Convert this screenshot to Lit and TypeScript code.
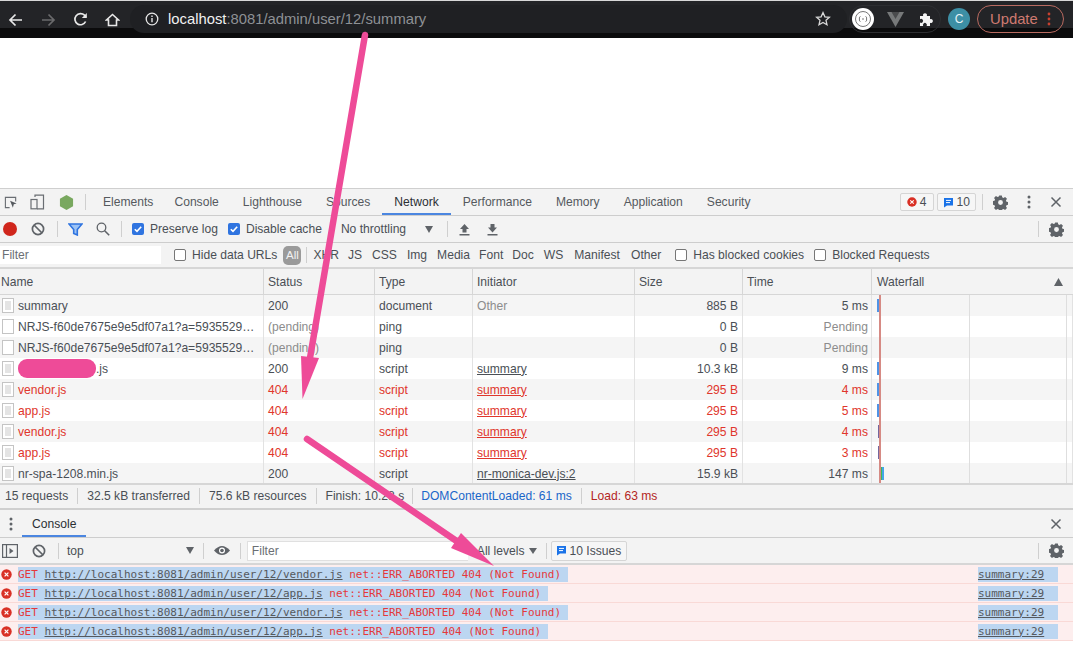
import { LitElement, html, css } from "lit";
import { customElement } from "lit/decorators.js";

const gear = (s = 15) => html`<svg class="ic" width=${s} height=${s} viewBox="0 0 16 16"><path fill="#5f6368" fill-rule="evenodd" d="M6.6 0.5h2.8l.4 2 1.3.6 1.8-1.1 2 2-1.1 1.8.6 1.3 2 .4v2.900l-2 .4-.6 1.3 1.1 1.8-2 2-1.8-1.1-1.3.6-.4 2H6.6l-.4-2-1.3-.6-1.8 1.1-2-2 1.1-1.8-.6-1.3-2-.4V6.6l2-.4.6-1.3L1.1 3.100l2-2 1.8 1.100 1.300-.6zM8 5.400a2.600 2.600 0 1 0 0 5.200 2.600 2.600 0 0 0 0-5.200z"/></svg>`;
const close = html`<svg class="ic" width="12" height="12" viewBox="0 0 12 12"><path d="M1.500 1.500l9 9M10.500 1.500l-9 9" stroke="#5f6368" stroke-width="1.500"/></svg>`;
const block = html`<svg class="ic" width="14" height="14" viewBox="0 0 14 14"><circle cx="7" cy="7" r="5.600" fill="none" stroke="#5f6368" stroke-width="1.700"/><path d="M3 3l8 8" stroke="#5f6368" stroke-width="1.700"/></svg>`;
const kebab = html`<svg class="ic" width="4" height="14" viewBox="0 0 4 14"><circle cx="2" cy="2" r="1.500" fill="#5f6368"/><circle cx="2" cy="7" r="1.500" fill="#5f6368"/><circle cx="2" cy="12" r="1.500" fill="#5f6368"/></svg>`;
const msgIcon = html`<svg class="ic" width="11" height="11" viewBox="0 0 11 11"><path d="M1 1h9v7.500H4L1 10.500z" fill="#1a73e8"/><path d="M3 3.400h5M3 5.600h4" stroke="#fff" stroke-width="1"/></svg>`;
const errIcon = (s = 11) => html`<svg class="ic" width=${s} height=${s} viewBox="0 0 11 11"><circle cx="5.500" cy="5.500" r="5.200" fill="#d93025"/><path d="M3.600 3.600l3.800 3.800M7.400 3.600L3.600 7.400" stroke="#fff" stroke-width="1.200"/></svg>`;
const fileIcon = html`<svg class="ic" width="12" height="15" viewBox="0 0 12 15"><rect x=".5" y=".5" width="11" height="14" fill="#fff" stroke="#c4c4c4"/></svg>`;
const scriptIcon = html`<svg class="ic" width="12" height="15" viewBox="0 0 12 15"><rect x=".5" y=".5" width="11" height="14" fill="#fff" stroke="#c4c4c4"/><path d="M3 3h6v9H3z" fill="#e4e4e4"/></svg>`;

type Row = { n: string; s: string; t: string; i: string; link?: boolean; size: string; time: string; err?: boolean; dim?: boolean; blank?: boolean; redact?: boolean; bar?: string };
const rows: Row[] = [
  { n: "summary", s: "200", t: "document", i: "Other", size: "885 B", time: "5 ms", bar: "blue" },
  { n: "NRJS-f60de7675e9e5df07a1?a=5935529…", s: "(pending)", t: "ping", i: "", size: "0 B", time: "Pending", dim: true, blank: true },
  { n: "NRJS-f60de7675e9e5df07a1?a=5935529…", s: "(pending)", t: "ping", i: "", size: "0 B", time: "Pending", dim: true, blank: true },
  { n: "main-bundle.js", s: "200", t: "script", i: "summary", link: true, size: "10.3 kB", time: "9 ms", redact: true, bar: "blue" },
  { n: "vendor.js", s: "404", t: "script", i: "summary", link: true, size: "295 B", time: "4 ms", err: true, bar: "blue" },
  { n: "app.js", s: "404", t: "script", i: "summary", link: true, size: "295 B", time: "5 ms", err: true, bar: "blue" },
  { n: "vendor.js", s: "404", t: "script", i: "summary", link: true, size: "295 B", time: "4 ms", err: true, bar: "purple" },
  { n: "app.js", s: "404", t: "script", i: "summary", link: true, size: "295 B", time: "3 ms", err: true, bar: "purple" },
  { n: "nr-spa-1208.min.js", s: "200", t: "script", i: "nr-monica-dev.js:2", link: true, size: "15.9 kB", time: "147 ms", bar: "green" },
];
const tabs = ["Elements", "Console", "Lighthouse", "Sources", "Network", "Performance", "Memory", "Application", "Security"];
const types = ["XHR", "JS", "CSS", "Img", "Media", "Font", "Doc", "WS", "Manifest", "Other"];
const gaps = [6, 9, 10, 10, 10, 9, 9, 10, 11, 11];
const logs = ["vendor.js", "app.js", "vendor.js", "app.js"];

@customElement("app-root")
export class AppRoot extends LitElement {
  static styles = css`
    :host { display: block; position: relative; width: 1073px; height: 647px; overflow: hidden; background: #fff;
      font-family: "Liberation Sans", Arial, sans-serif; font-size: 12.1px; color: #4a4f55; }
    .ic { display: block; flex: none; }
    .chrome { height: 38px; box-sizing: border-box; border-top: 1px solid #d8d8d8; background: linear-gradient(#232427 0 27px, #0b0b0c 27px); display: flex; align-items: center; padding-left: 0; }
    .nav { display: flex; align-items: center; width: 130px; padding-left: 0; flex: none; }
    .nav > div { width: 32px; display: flex; justify-content: center; }
    .omni { width: 717px; height: 28px; margin-top: -1px; border-radius: 14px; background: #1f2023; flex: none; display: flex; align-items: center; padding-left: 15px; box-sizing: border-box; font-size: 14.8px; color: #8e9195; position: relative; }
    .omni b { font-weight: 400; color: #f1f1f1; }
    .omni .ic:first-child { margin-right: 9px; }
    .star { position: absolute; right: 16px; top: 6px; }
    .ext { margin-left: 2px; width: 92px; height: 28px; margin-top: -1px; border: 1px solid #2d2e31; border-radius: 14px; box-sizing: border-box; display: flex; align-items: center; gap: 13px; padding-left: 2px; flex: none; }
    .circ { width: 22px; height: 22px; border-radius: 50%; background: #fff; display: flex; align-items: center; justify-content: center; }
    .avatar { width: 22px; height: 22px; border-radius: 50%; background: #3d8fa5; color: #e8f3f6; font-size: 12px; display: flex; align-items: center; justify-content: center; margin: -1px 0 0 7px; flex: none; }
    .update { width: 87px; height: 28px; margin: -1px 0 0 7px; border: 1px solid #b96a60; border-radius: 14px; box-sizing: border-box; color: #cf7a70; font-size: 14.8px; display: flex; align-items: center; justify-content: space-between; padding: 0 12px; flex: none; }
    .blank { height: 150px; background: #fff; }

    .dev { border-top: 1px solid #cfcfcf; background: #f3f3f3; height: 458px; }
    .bar { display: flex; align-items: center; background: #f3f3f3; border-bottom: 1px solid #cdcdcd; box-sizing: border-box; position: relative; }
    .tabs { height: 27px; padding-left: 3px; }
    .tb { display: flex; align-items: center; height: 100%; padding: 0 12px; box-sizing: border-box; color: #55595e; white-space: nowrap; }
    .tb:first-of-type { margin-right: -3px; }
    .tb.on { color: #2b2f33; border-bottom: 2px solid #4b86e0; padding-top: 2px; }
    .sep { width: 1px; height: 16px; background: #cfcfcf; flex: none; }
    .spacer { flex: 1; }
    .badge { height: 18px; border: 1px solid #d5d5d5; border-radius: 2px; display: flex; align-items: center; gap: 3px; padding: 0 5px; box-sizing: border-box; background: #f6f6f6; }
    .tool { height: 27px; }
    .cb { width: 12px; height: 12px; border-radius: 2px; box-sizing: border-box; flex: none; border: 1px solid #767676; background: #fff; }
    .cb.on { background: #2f74e0; border: none; display: flex; align-items: center; justify-content: center; }
    .tri { width: 0; height: 0; border-left: 4px solid transparent; border-right: 4px solid transparent; border-top: 7px solid #5f6368; flex: none; }
    .filter { height: 26px; border-bottom: 2px solid #d6d6d6; }
    .finput { width: 161px; height: 18px; background: #fff; box-sizing: border-box; padding-left: 2px; line-height: 18px; color: #6b6f74; flex: none; }
    .all { width: 18px; height: 19px; background: #9a9a9a; color: #f2f2f2; border-radius: 5px; display: flex; align-items: center; justify-content: center; font-size: 11.5px; }

    .grid { display: grid; grid-template-columns: 264px 111px 98px 162px 108px 129px 1fr; }
    .hd { height: 26px; border-bottom: 1px solid #d6d6d6; box-sizing: border-box; }
    .hd > div { border-right: 1px solid #d6d6d6; display: flex; align-items: center; padding-left: 4px; color: #4a4f55; height: 25px; }
    .hd > div:first-child { padding-left: 1px; }
    .hd > div:last-child { border-right: none; padding-left: 5px; justify-content: space-between; padding-right: 10px; }
    .rowsWrap { position: relative; }
    .row { height: 21px; background: #fff; }
    .row:nth-child(odd) { background: #f5f5f5; }
    .row > div { border-right: 1px solid #e2e2e2; display: flex; align-items: center; padding: 0 3px 0 4px; box-sizing: border-box; white-space: nowrap; overflow: hidden; position: relative; min-width: 0; }
    .row > div:first-child { padding-left: 2px; gap: 4px; }
    .row > .r { justify-content: flex-end; padding-right: 4px; }
    .row > .r.t { padding-right: 3px; }
    .row.err > div { color: #e0362c; }
    .dim { color: #8c8c8c !important; }
    .lnk { text-decoration: underline; }
    .redact { width: 78px; height: 19px; background: #ee4b98; border-radius: 9px; margin-right: -4px; flex: none; }
    .wf { background-image: linear-gradient(#dedede, #dedede), linear-gradient(#dedede, #dedede); background-size: 1px 100%; background-repeat: no-repeat; background-position: 97px 0, 194px 0; }
    .wbar { position: absolute; left: 5px; top: 4px; width: 2px; height: 13px; }
    .wbar.blue { background: #4f93e6; }
    .wbar.purple { background: #75679e; left: 6px; }
    .wbar.green { background: linear-gradient(90deg, #3fb85a 60%, #43a5e8 60%); width: 4px; left: 8px; }
    .redline { position: absolute; left: 879px; top: 0; bottom: 0; width: 2px; background: #d68a84; }

    .status { height: 27px; border-top: 2px solid #d6d6d6; border-bottom: 2px solid #cfcfcf; margin-top: -1px; padding: 0 0 1px 5px; }
    .status .sep { margin: 0 9px; }
    .ctabs { height: 27px; margin-top: 1px; }
    .ctool { height: 27px; border-bottom: 2px solid #d6d6d6; }
    .cinput { width: 221px; height: 20px; background: #fff; border: 1px solid #e0e0e0; border-right: none; box-sizing: border-box; line-height: 18px; padding-left: 4px; color: #6b6f74; flex: none; }
    .logs { font-family: "DejaVu Sans Mono", "Liberation Mono", monospace; font-size: 11px; background: #fff; height: 90px; }
    .log { height: 19px; background: #fdeeee; border-bottom: 1px solid #f9d9d6; box-sizing: border-box; display: flex; align-items: center; color: #e5383b; padding-left: 1px; }
    .log .msg { margin-left: 6px; background: #bcd6f1; line-height: 15px; padding-right: 7px; white-space: pre; flex: none; }
    .log u { color: #55595e; }
    .log .src { margin-left: auto; margin-right: 15px; width: 80px; background: #bcd6f1; line-height: 15px; color: #55595e; text-decoration: underline; box-sizing: border-box; flex: none; }
    .arrows { position: absolute; left: 0; top: 0; pointer-events: none; }
  `;

  render() {
    const check = html`<svg width="10" height="10" viewBox="0 0 10 10"><path d="M1.800 5.200l2.200 2.200 4.200-4.600" fill="none" stroke="#fff" stroke-width="1.600"/></svg>`;
    const cb = (on: boolean, ml: number) => html`<span class="cb ${on ? "on" : ""}" style="margin-left:${ml}px">${on ? check : ""}</span>`;
    const ml = (v: number, t: string) => html`<span style="margin-left:${v}px;white-space:nowrap">${t}</span>`;
    return html`
      <div class="chrome">
        <div class="nav">
          <div><svg width="16" height="14" viewBox="0 0 16 14"><path d="M14 7H2.500M7.500 1.500L2 7l5.500 5.500" fill="none" stroke="#e8e8e8" stroke-width="1.700"/></svg></div>
          <div><svg width="16" height="14" viewBox="0 0 16 14"><path d="M2 7h11.500M8.500 1.500L14 7l-5.500 5.500" fill="none" stroke="#6a6a6c" stroke-width="1.700"/></svg></div>
          <div><svg width="15" height="15" viewBox="0 0 15 15"><path d="M12.600 9.500A5.600 5.600 0 1 1 11.500 3.200L13 5" fill="none" stroke="#e8e8e8" stroke-width="1.700"/><path d="M13.800 1v5h-5z" fill="#e8e8e8"/></svg></div>
          <div><svg width="15" height="14" viewBox="0 0 15 14"><path d="M7.500 1.500L1.500 7h2v5.500h8V7h2z" fill="none" stroke="#e8e8e8" stroke-width="1.600"/></svg></div>
        </div>
        <div class="omni">
          <svg class="ic" width="14" height="14" viewBox="0 0 14 14"><circle cx="7" cy="7" r="5.800" fill="none" stroke="#e6e6e6" stroke-width="1.300"/><path d="M7 6v4.200M7 3.600v1.400" stroke="#e6e6e6" stroke-width="1.400"/></svg>
          <span><b>localhost</b>:8081/admin/user/12/summary</span>
          <svg class="star" width="16" height="16" viewBox="0 0 16 16"><path d="M8 1.600l1.900 4.200 4.500.5-3.400 3 1 4.500L8 11.500l-4 2.300 1-4.500-3.400-3 4.500-.5z" fill="none" stroke="#d8d8d8" stroke-width="1.300"/></svg>
        </div>
        <div class="ext">
          <div class="circ"><svg width="18" height="18" viewBox="0 0 18 18"><circle cx="9" cy="9" r="7.500" fill="none" stroke="#777" stroke-width="1"/><path d="M6.500 6.500Q5 6.500 5.400 9 5 11.500 6.500 11.500M11.500 6.500Q13 6.500 12.600 9 13 11.500 11.500 11.500M8 9h2" fill="none" stroke="#777"/></svg></div>
          <svg width="17" height="15" viewBox="0 0 17 15"><path d="M0 0h17L8.500 15z" fill="#77797a"/><path d="M4.500 0h8L8.500 7z" fill="#4a4b4d"/></svg>
          <svg style="margin-left:2px" width="15" height="15" viewBox="0 0 15 15"><path d="M1 4h3.200a2 2 0 1 1 3.600 0H11v3.200a2 2 0 1 1 0 3.600V14H7.600a2 2 0 1 0-3.400 0H1v-3.400a2 2 0 1 0 0-3.400z" fill="#f4f4f4"/></svg>
        </div>
        <div class="avatar">C</div>
        <div class="update"><span>Update</span><svg width="4" height="14" viewBox="0 0 4 14"><circle cx="2" cy="2" r="1.400" fill="#c8402f"/><circle cx="2" cy="7" r="1.400" fill="#c8402f"/><circle cx="2" cy="12" r="1.400" fill="#c8402f"/></svg></div>
      </div>
      <div class="blank"></div>

      <div class="dev">
        <div class="bar tabs">
          <svg class="ic" style="margin-left:1px" width="14" height="15" viewBox="0 0 15 15"><path d="M6 13H1.500V2h11v4.500" fill="none" stroke="#6a6e73" stroke-width="1.200"/><path d="M6.500 5.500l7 3-3 1-1 3.500z" fill="#55595e"/></svg>
          <svg class="ic" style="margin-left:12px" width="15" height="16" viewBox="0 0 15 16"><path d="M5 3V1.200h8.500v13.600H7" fill="none" stroke="#6a6e73" stroke-width="1.200"/><rect x="1" y="5.500" width="6" height="9.300" fill="none" stroke="#6a6e73" stroke-width="1.200"/></svg>
          <svg class="ic" style="margin-left:14px" width="15" height="17" viewBox="0 0 16 17"><path d="M8 .5l7 4v8l-7 4-7-4v-8z" fill="#79a85f"/></svg>
          <span class="sep" style="margin:0 5px 0 11px"></span>
          ${tabs.map((t) => html`<div class="tb ${t === "Network" ? "on" : ""}">${t}</div>`)}
          <span class="spacer"></span>
          <div class="badge" style="padding:0 6px">${errIcon(10)}<span>4</span></div>
          <div class="badge" style="margin-left:3px">${msgIcon}<span>10</span></div>
          <span class="sep" style="margin:0 10px 0 6px"></span>
          ${gear()}
          <span style="margin-left:19px">${kebab}</span>
          <span style="margin:0 11px 0 19px">${close}</span>
        </div>

        <div class="bar tool">
          <span style="margin-left:3px;width:14px;height:14px;border-radius:50%;background:#d0261c;flex:none"></span>
          <span style="margin-left:14px">${block}</span>
          <span class="sep" style="margin-left:12px"></span>
          <svg class="ic" style="margin-left:10px" width="15" height="13" viewBox="0 0 15 13"><path d="M1 1h13L9.300 6.500V12l-3.600-1.500v-4z" fill="#9cc3f5" stroke="#2f74e0" stroke-width="1.600"/></svg>
          <svg class="ic" style="margin-left:13px" width="14" height="14" viewBox="0 0 14 14"><circle cx="5.500" cy="5.500" r="4.300" fill="none" stroke="#5f6368" stroke-width="1.300"/><path d="M8.700 8.700l4.500 4.500" stroke="#5f6368" stroke-width="1.600"/></svg>
          <span class="sep" style="margin-left:11px"></span>
          ${cb(true, 10)}${ml(6, "Preserve log")}
          ${cb(true, 10)}${ml(6, "Disable cache")}
          <span class="sep" style="margin-left:9px;background:#e0e0e0"></span>
          ${ml(9, "No throttling")}
          <span class="tri" style="margin-left:19px"></span>
          <span class="sep" style="margin-left:14px"></span>
          <svg class="ic" style="margin-left:11px" width="11" height="13" viewBox="0 0 11 13"><path d="M5.500 1L10 6H7.500v3.500h-4V6H1zM.5 11h10v1.400H.5z" fill="#5f6368"/></svg>
          <svg class="ic" style="margin-left:17px" width="11" height="13" viewBox="0 0 11 13"><path d="M5.500 9.500L10 4.500H7.500V1h-4v3.500H1zM.5 11h10v1.400H.5z" fill="#5f6368"/></svg>
          <span class="spacer"></span>
          <span class="sep" style="margin-right:10px"></span>
          <span style="margin-right:9px">${gear()}</span>
        </div>

        <div class="bar filter">
          <div class="finput">Filter</div>
          ${cb(false, 13)}${ml(6, "Hide data URLs")}
          <span class="all" style="margin-left:6px">All</span>
          <span class="sep" style="margin:0 0 0 5px"></span>
          ${types.map((t, i) => ml(gaps[i], t))}
          ${cb(false, 14)}${ml(6, "Has blocked cookies")}
          ${cb(false, 10)}${ml(6, "Blocked Requests")}
        </div>

        <div class="grid hd">
          <div>Name</div><div>Status</div><div>Type</div><div>Initiator</div><div>Size</div><div>Time</div>
          <div><span>Waterfall</span><svg width="9" height="8" viewBox="0 0 9 8"><path d="M4.500 0L9 8H0z" fill="#5f6368"/></svg></div>
        </div>

        <div class="rowsWrap">
          ${rows.map((r) => html`
            <div class="grid row ${r.err ? "err" : ""}">
              <div>${r.blank ? fileIcon : scriptIcon}${r.redact ? html`<span class="redact"></span><span>.js</span>` : html`<span>${r.n}</span>`}</div>
              <div class=${r.s.startsWith("(") ? "dim" : ""}>${r.s}</div>
              <div>${r.t}</div>
              <div class=${r.i === "Other" ? "dim" : ""}>${r.link ? html`<span class="lnk">${r.i}</span>` : r.i}</div>
              <div class="r">${r.size}</div>
              <div class="r t ${r.dim ? "dim" : ""}">${r.time}</div>
              <div class="wf">${r.bar ? html`<span class="wbar ${r.bar}"></span>` : ""}</div>
            </div>`)}
          <div class="redline"></div>
        </div>

        <div class="bar status">
          <span>15 requests</span><span class="sep"></span>
          <span>32.5 kB transferred</span><span class="sep"></span>
          <span>75.6 kB resources</span><span class="sep"></span>
          <span>Finish: 10.28 s</span><span class="sep" style="margin:0 8px"></span>
          <span style="color:#1a66c9">DOMContentLoaded: 61 ms</span><span class="sep"></span>
          <span style="color:#b3261e">Load: 63 ms</span>
        </div>

        <div class="bar ctabs">
          <span style="margin-left:9px">${kebab}</span>
          <div class="tb on" style="margin-left:9px;margin-right:0;padding:2px 10px 0">Console</div>
          <span class="spacer"></span>
          <span style="margin-right:11px">${close}</span>
        </div>

        <div class="bar ctool">
          <svg class="ic" style="margin-left:2px" width="16" height="14" viewBox="0 0 16 14"><rect x=".6" y=".6" width="14.800" height="12.800" fill="none" stroke="#5f6368" stroke-width="1.200"/><path d="M4.500 1v12" stroke="#5f6368" stroke-width="1.200"/><path d="M7.500 4l4 3-4 3z" fill="#5f6368"/></svg>
          <span style="margin-left:14px">${block}</span>
          <span class="sep" style="margin-left:12px"></span>
          ${ml(8, "top")}
          <span class="tri" style="margin-left:102px"></span>
          <span class="sep" style="margin-left:9px"></span>
          <svg class="ic" style="margin-left:10px" width="16" height="11" viewBox="0 0 16 11"><path d="M0 5.500Q8-3.500 16 5.500Q8 14.500 0 5.500z" fill="#5f6368"/><circle cx="8" cy="5.500" r="3" fill="#fff"/><circle cx="8" cy="5.500" r="1.800" fill="#5f6368"/></svg>
          <span class="sep" style="margin-left:10px"></span>
          <div class="cinput" style="margin-left:6px">Filter</div>
          ${ml(9, "All levels")}
          <span class="tri" style="margin-left:4px;border-top-width:6px"></span>
          <span class="sep" style="margin-left:9px"></span>
          <div class="badge" style="margin-left:4px;height:20px;padding:0 5px 0 4px">${msgIcon}<span>10 Issues</span></div>
          <span class="spacer"></span>
          <span class="sep" style="margin-right:10px"></span>
          <span style="margin-right:9px">${gear()}</span>
        </div>

        <div class="logs">
          ${logs.map((f) => html`
            <div class="log">${errIcon()}<span class="msg">GET <u>http://localhost:8081/admin/user/12/${f}</u> net::ERR_ABORTED 404 (Not Found)</span><span class="src">summary:29</span></div>`)}
        </div>
      </div>

      <svg class="arrows" width="1073" height="647" viewBox="0 0 1073 647">
        <path d="M365 35L310 358" stroke="#ee4b98" stroke-width="6.500" stroke-linecap="round" fill="none"/>
        <path d="M301 356L319 358L302.500 399z" fill="#ee4b98"/>
        <path d="M307 439L458 542" stroke="#ee4b98" stroke-width="6.500" stroke-linecap="round" fill="none"/>
        <path d="M461 533L451 548L494 566z" fill="#ee4b98"/>
      </svg>
    `;
  }
}
